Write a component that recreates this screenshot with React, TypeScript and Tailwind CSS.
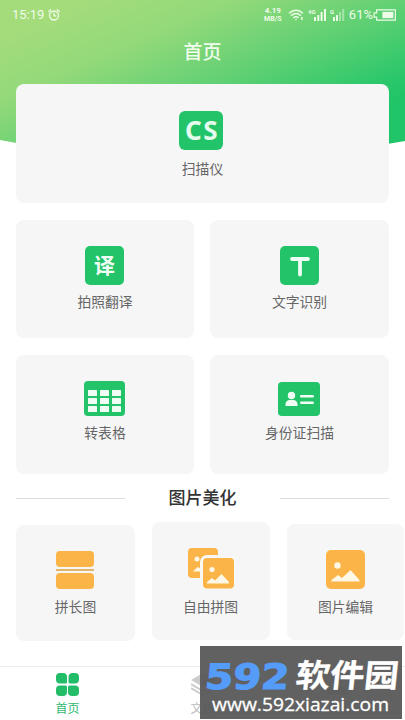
import React from 'react';

interface CardProps {
  label: string;
  icon: React.ReactNode;
  className?: string;
  labelClassName?: string;
}

// Header background with the curved bottom edge
const HeaderBackground: React.FC = () => (
  <svg className="absolute left-0 top-0" width="405" height="160" viewBox="0 0 405 160">
    <defs>
      <linearGradient id="header" gradientUnits="userSpaceOnUse" x1="110" y1="-14" x2="198" y2="190">
        <stop offset="0" stopColor="#a5dc7b" />
        <stop offset="0.28" stopColor="#93d97a" />
        <stop offset="0.6" stopColor="#5fd073" />
        <stop offset="0.9" stopColor="#28c76a" />
        <stop offset="1" stopColor="#1fc568" />
      </linearGradient>
    </defs>
    <path d="M0 0H405V141Q202 179 0 140Z" fill="url(#header)" />
  </svg>
);

const StatusBar: React.FC = () => (
  <div className="flex h-[29px] items-center justify-between pl-3 pr-[9px] text-[#effbe9]">
    <div className="flex items-center gap-1">
      <span className="text-[13px] leading-none">15:19</span>
      <svg width="12" height="12" viewBox="0 0 12 12" fill="none" stroke="currentColor" strokeWidth="1.3" strokeLinecap="round">
        <circle cx="6" cy="6.5" r="4.5" />
        <path d="M6 4v2.800h2M.8 2.500 2.700.8M11.200 2.500 9.300.8" />
      </svg>
    </div>
    <div className="flex items-center">
      <div className="mr-[5px] w-5 text-center text-[8px] font-bold">
        <div className="leading-[9px]">4.19</div>
        <div className="text-[7px] leading-[8px]">MB/S</div>
      </div>
      <svg width="16" height="12" viewBox="0 0 16 12" fill="none" stroke="currentColor" strokeWidth="1.5">
        <path d="M1 4.200Q8-1.800 15 4.200M3 6.700Q8 2.200 13 6.700M5.200 9Q8 6.600 10.600 9" />
        <circle cx="8" cy="10.5" r=".8" fill="currentColor" stroke="none" />
        <path d="M13.800 8v3" />
      </svg>
      <svg className="ml-1" width="19" height="12" viewBox="0 0 19 12" fill="currentColor">
        <text x="0" y="5" fontSize="6" fontWeight="700">4G</text>
        <path d="M6 8h2v4H6zM9.300 6h2v6h-2zM12.600 3h2v9h-2zM16 0h2v12h-2z" />
      </svg>
      <svg className="ml-[3px]" width="15" height="12" viewBox="0 0 15 12" fill="currentColor">
        <text x="0" y="5" fontSize="6" fontWeight="700">G</text>
        <path d="M3 8h2v4H3zM6 6h2v6H6z" />
        <path d="M9 3h2v9H9zM12.200 0h2v12h-2z" opacity=".45" />
      </svg>
      <span className="ml-1 text-[13px] leading-none">61%</span>
      <svg width="23" height="12" viewBox="0 0 22 11" fill="none" stroke="currentColor">
        <path d="M3.500 .6h17.900v9.800H3.500V7.500H1V3.500h2.500z" strokeWidth="1.100" />
        <path d="M9 2.500h10.500v6H9z" fill="currentColor" stroke="none" />
      </svg>
    </div>
  </div>
);

const Card: React.FC<CardProps> = ({ label, icon, className = '', labelClassName = 'mt-[7px]' }) => (
  <div className={`flex flex-col items-center rounded-lg bg-[#f6f6f7] ${className}`}>
    <div className="flex h-10 items-end">{icon}</div>
    <div className={`whitespace-nowrap text-[13.8px] leading-5 text-[#666] ${labelClassName}`}>{label}</div>
  </div>
);

const ScanIcon = () => (
  <div className="mr-[3px] flex h-[39px] w-11 items-center justify-center rounded-md bg-[#23c469] pb-px pl-[2px] font-['Noto_Sans'] text-[26px] font-bold tracking-[1.5px] text-[#e4fbed]">
    CS
  </div>
);

const TranslateIcon = () => (
  <div className="mr-px flex h-[39px] w-[39px] items-center justify-center rounded-[5px] bg-[#23c469] pt-[2px] text-[21px] font-bold leading-none text-[#effdf4]">
    译
  </div>
);

const TextIcon = () => (
  <svg width="39" height="39" viewBox="0 0 39 39">
    <rect width="39" height="39" rx="5" fill="#23c469" />
    <path d="M12 13H28M20 13V28.500" stroke="#effdf4" strokeWidth="3.800" strokeLinecap="round" fill="none" />
  </svg>
);

const TableIcon = () => (
  <svg className="mr-px" width="41" height="35" viewBox="0 0 41 35">
    <rect width="41" height="35" rx="4" fill="#23c469" />
    {[9, 17, 25].map((y) =>
      [4, 16, 28].map((x) => <rect key={`${x}-${y}`} x={x} y={y} width="9" height="6" rx=".5" fill="#effdf4" />)
    )}
  </svg>
);

const IdCardIcon = () => (
  <svg className="mr-px" width="42" height="34" viewBox="0 0 42 34">
    <rect width="42" height="34" rx="4" fill="#23c469" />
    <g fill="#effdf4">
      <circle cx="13.500" cy="13.500" r="3.700" />
      <path d="M7.500 24v-1.500c0-3 2-4.500 4-4.500h4c2 0 4 1.500 4 4.500V24z" />
      <rect x="22" y="13" width="14" height="2.600" rx="1.300" />
      <rect x="22" y="19.500" width="14" height="2.600" rx="1.300" />
    </g>
  </svg>
);

const LongImageIcon = () => (
  <svg className="mr-px" width="38" height="38" viewBox="0 0 38 38" fill="#fbb447">
    <rect width="38" height="16" rx="4" />
    <rect y="18" width="38" height="2" fill="#dfb66c" />
    <rect y="22" width="38" height="16" rx="4" />
  </svg>
);

const CollageIcon = () => (
  <svg width="47" height="42" viewBox="0 0 47 42">
    <rect x="0" y="1" width="30" height="30" rx="4" fill="#fbb447" />
    <circle cx="9" cy="12" r="2.500" fill="#fff7e6" />
    <path d="M5 24.500 9.500 20l5 2v2.500z" fill="#fff7e6" />
    <rect x="12" y="8" width="37" height="37" rx="7" fill="#f8f7f4" />
    <rect x="15" y="11" width="31" height="30.500" rx="4" fill="#fbb447" />
    <circle cx="24" cy="22.500" r="2.600" fill="#fff7e6" />
    <path d="M19 36.500v-1.500l5-4 3 2.500 6.500-6.500 7.500 8v1.500z" fill="#fff7e6" />
  </svg>
);

const EditIcon = () => (
  <svg width="39" height="39" viewBox="0 0 39 39">
    <rect width="39" height="39" rx="5" fill="#fbb447" />
    <g fill="#fff7e6">
      <circle cx="11.500" cy="15.500" r="3.200" />
      <path d="M5.500 31.500v-1.500l6.500-5 4 3 8.500-8 9 10v1.500z" />
    </g>
  </svg>
);

const Watermark: React.FC = () => (
  <div className="absolute left-[200px] top-[646px] h-[73px] w-[202px] bg-[#555]/93">
    <svg width="202" height="73" viewBox="0 0 202 73">
      <text
        x="3"
        y="43"
        transform="translate(5 0) skewX(-5)"
        fontFamily="'DejaVu Sans', sans-serif"
        fontSize="35"
        fontWeight="700"
        textLength="84"
        lengthAdjust="spacingAndGlyphs"
        fill="#559cf8"
        stroke="#559cf8"
        strokeWidth="1.2"
      >
        592
      </text>
      <text
        x="94"
        y="41"
        transform="translate(5 0) skewX(-6)"
        fontFamily="'Noto Sans CJK SC', sans-serif"
        fontSize="32"
        fontWeight="700"
        textLength="103"
        lengthAdjust="spacingAndGlyphs"
        fill="#fff"
        stroke="#fff"
        strokeWidth=".3"
      >
        软件园
      </text>
      <text
        x="12"
        y="65"
        fontFamily="'Open Sans', 'Noto Sans', sans-serif"
        fontSize="19"
        textLength="177"
        lengthAdjust="spacingAndGlyphs"
        fill="#fff"
        stroke="#fff"
        strokeWidth=".3"
      >
        www.592xiazai.com
      </text>
    </svg>
  </div>
);

const BottomNav: React.FC = () => (
  <nav className="mt-[25px] grid h-[54px] grid-cols-3 border-t border-[#ededed] text-xs">
    <div className="flex flex-col items-center pt-[6px] text-[#31b972]">
      <svg width="23" height="23" viewBox="0 0 23 23" fill="#23bd69">
        <path d="M4 0h3a4 4 0 0 1 4 4v5a1.500 1.500 0 0 1-1.500 1.500H4A4 4 0 0 1 0 6.500V4a4 4 0 0 1 4-4z" />
        <path d="M16 0h3a4 4 0 0 1 4 4v2.500a4 4 0 0 1-4 4h-5a1.500 1.500 0 0 1-1.500-1.500V4A4 4 0 0 1 16 0z" />
        <path d="M4 12.500h5.500A1.500 1.500 0 0 1 11 14v5a4 4 0 0 1-4 4H4a4 4 0 0 1-4-4v-2.500a4 4 0 0 1 4-4z" />
        <path d="M14 12.500h5a4 4 0 0 1 4 4V19a4 4 0 0 1-4 4h-3a4 4 0 0 1-4-4v-5a1.500 1.500 0 0 1 1.500-1.500z" />
      </svg>
      <span className="mt-[5px] leading-4">首页</span>
    </div>
    <div className="flex flex-col items-center pt-[6px] text-[#bbb]">
      <svg width="24" height="23" viewBox="0 0 24 23" fill="#ccc">
        <path d="M12 0 24 7 12 14 0 7z" />
        <path d="m0 11 12 7 12-7M0 15l12 7 12-7" fill="none" stroke="#ccc" strokeWidth="2" />
      </svg>
      <span className="mt-[5px] leading-4">文档</span>
    </div>
    <div className="flex flex-col items-center pt-[6px]">
      <svg width="23" height="23" viewBox="0 0 23 23" fill="#ccc">
        <circle cx="11.500" cy="6" r="5" />
        <path d="M1 22c0-6 4-9 10.500-9S22 16 22 22z" />
      </svg>
    </div>
  </nav>
);

const App: React.FC = () => {
  return (
    <div className="relative h-[720px] w-[405px] overflow-hidden bg-white font-[Roboto,'Noto_Sans_CJK_SC',sans-serif]">
      <HeaderBackground />

      <div className="relative">
        <StatusBar />
        <h1 className="mt-[10px] text-center text-[19px] font-medium leading-7 text-[#f1fcec]">首页</h1>

        <main className="pl-4 pt-[17px]">
          <Card
            className="mr-4 h-[119px] pt-[26px]"
            labelClassName="mt-[9px]"
            label="扫描仪"
            icon={<ScanIcon />}
          />

          <div className="mr-4 mt-[17px] grid grid-cols-[178px_179px] gap-x-4 gap-y-[17px]">
            <Card className="h-[118px] pt-[25px]" label="拍照翻译" icon={<TranslateIcon />} />
            <Card className="h-[118px] pt-[25px]" label="文字识别" icon={<TextIcon />} />
            <Card className="h-[119px] pt-[21px]" label="转表格" icon={<TableIcon />} />
            <Card className="h-[119px] pt-[21px]" label="身份证扫描" icon={<IdCardIcon />} />
          </div>

          <div className="mr-4 mt-3 flex h-6 items-center justify-between">
            <div className="h-px w-[109px] bg-[#ddd]" />
            <h2 className="text-[17px] font-medium leading-6 text-[#333]">图片美化</h2>
            <div className="h-px w-[109px] bg-[#ddd]" />
          </div>

          <div className="mt-3 flex items-start gap-[17px]">
            <Card
              className="mt-[3px] h-[116px] w-[119px] pt-6"
              labelClassName="mt-2"
              label="拼长图"
              icon={<LongImageIcon />}
            />
            <Card
              className="h-[118px] w-[118px] pt-[27px]"
              labelClassName="mr-px mt-2"
              label="自由拼图"
              icon={<CollageIcon />}
            />
            <Card
              className="mt-[2px] h-[116px] w-[117px] pt-[25px]"
              labelClassName="mt-2"
              label="图片编辑"
              icon={<EditIcon />}
            />
          </div>
        </main>

        <BottomNav />
      </div>

      <Watermark />
    </div>
  );
};

export default App;
